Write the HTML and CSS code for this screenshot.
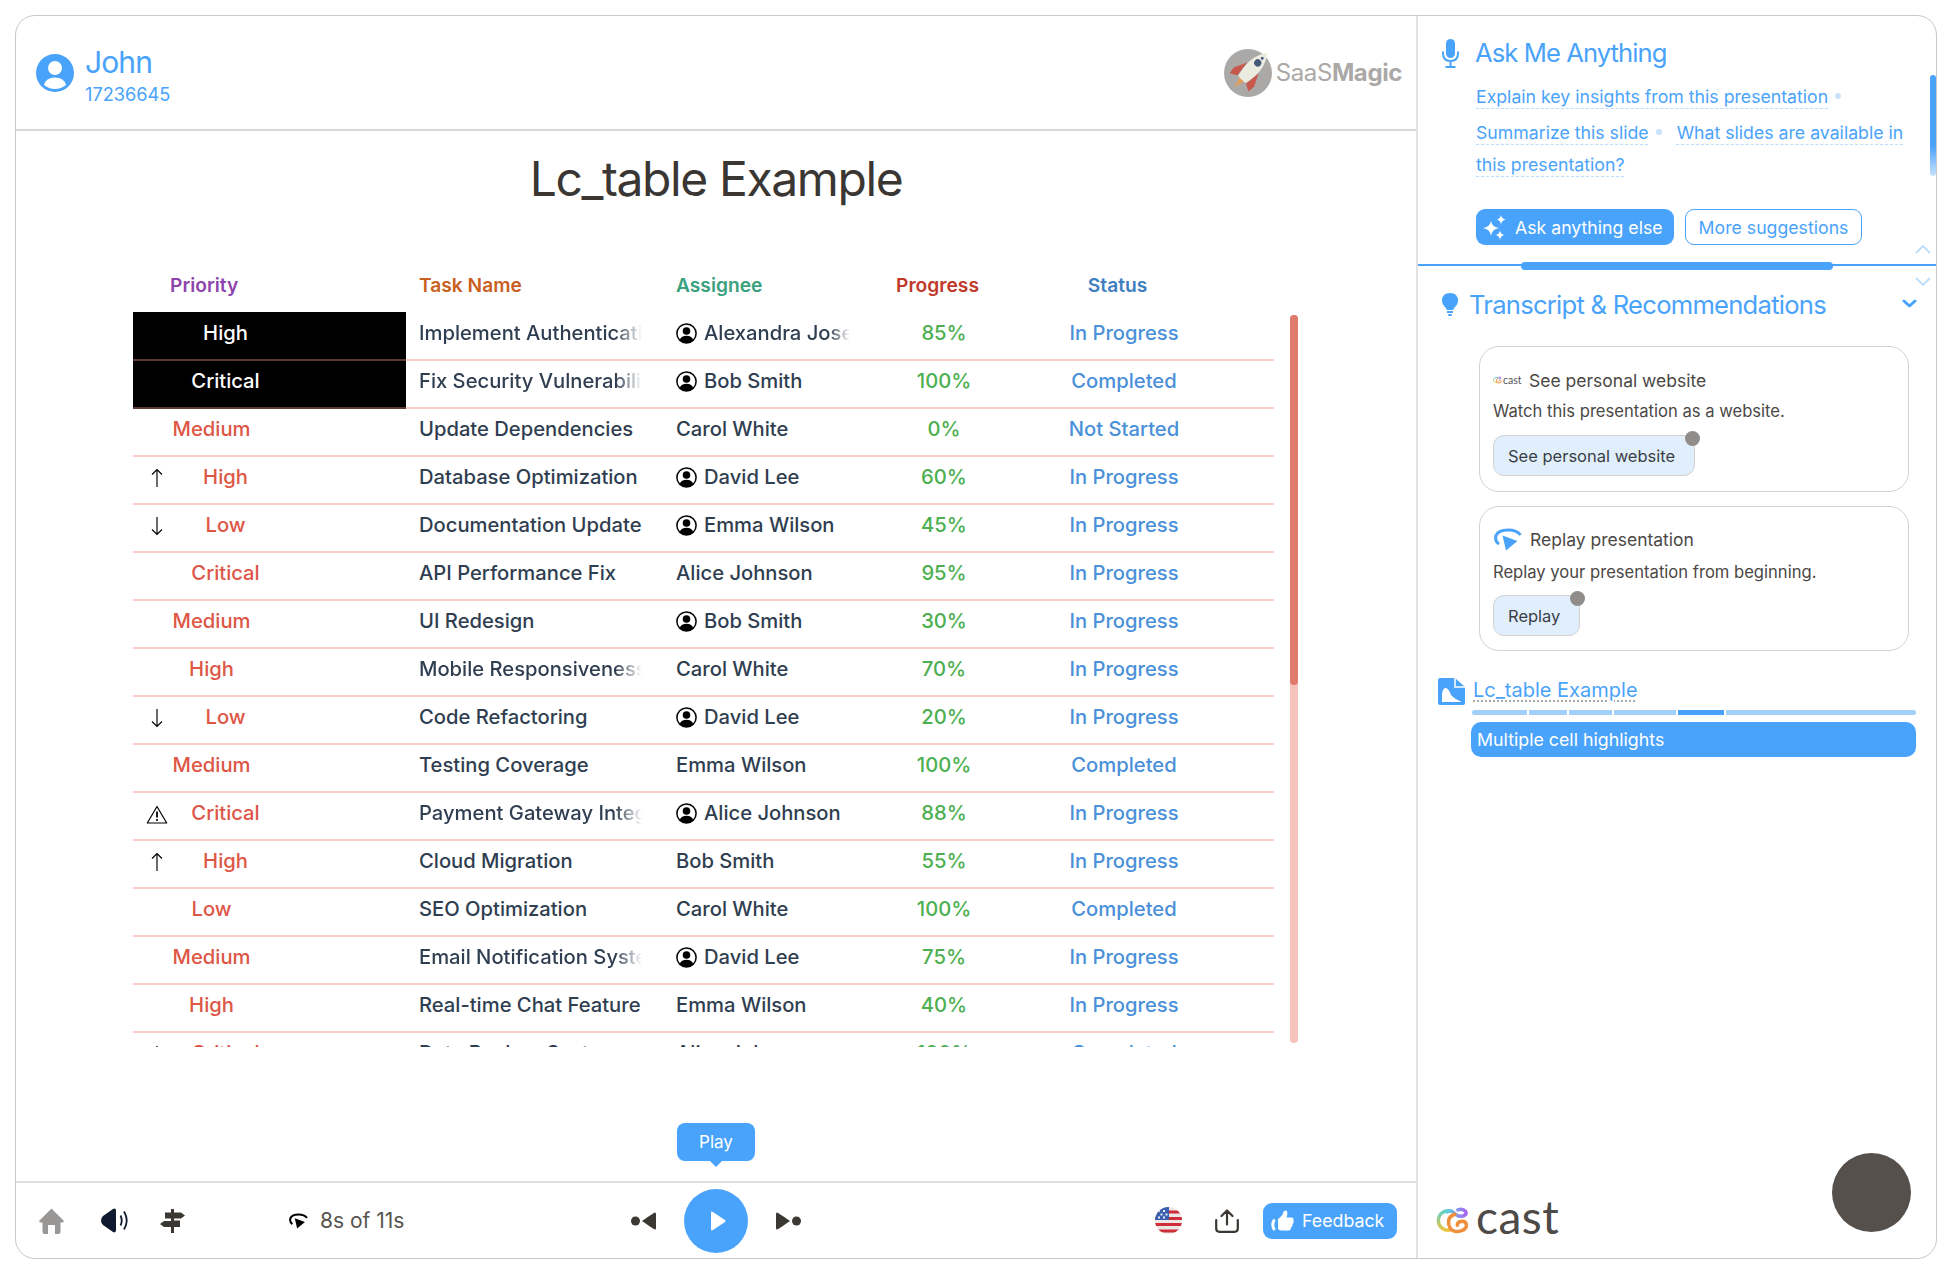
FILE: index.html
```html
<!DOCTYPE html>
<html lang="en">
<head>
<meta charset="utf-8">
<title>Lc_table Example</title>
<link rel="stylesheet" href="styles.css">
</head>
<body>
<svg class="defs" width="0" height="0" aria-hidden="true">
  <defs>
    <symbol id="person" viewBox="0 0 21 21">
      <circle cx="10.5" cy="10.5" r="9.6" fill="#fff" stroke="#000" stroke-width="1.5"/>
      <circle cx="10.5" cy="8" r="3.8" fill="#000"/>
      <path d="M3.6 17 Q5.5 12.8 10.5 12.8 Q15.5 12.8 17.4 17 Q14.5 20 10.5 20 Q6.5 20 3.6 17Z" fill="#000"/>
    </symbol>
    <symbol id="up" viewBox="0 0 14 20">
      <path d="M7 19V1.5M2 6.5L7 1.5L12 6.5" fill="none" stroke="#000" stroke-width="1.15"/>
    </symbol>
    <symbol id="down" viewBox="0 0 14 20">
      <path d="M7 1V18.5M2 13.5L7 18.5L12 13.5" fill="none" stroke="#000" stroke-width="1.15"/>
    </symbol>
    <symbol id="warn" viewBox="0 0 22 19">
      <path d="M11 1.5L20.7 18H1.3Z" fill="none" stroke="#000" stroke-width="1.2" stroke-linejoin="round"/>
      <path d="M11 6.5V12.5" stroke="#000" stroke-width="1.8"/>
      <circle cx="11" cy="15" r="1.1" fill="#000"/>
    </symbol>
    <linearGradient id="castA" x1="0" y1="0" x2="0" y2="1">
      <stop offset="0" stop-color="#62d0c8"/><stop offset="1" stop-color="#ecc63f"/>
    </linearGradient>
    <linearGradient id="castB" x1="0" y1="0" x2="1" y2="0">
      <stop offset="0" stop-color="#5ad3e0"/><stop offset="1" stop-color="#a765f5"/>
    </linearGradient>
    <symbol id="castmark" viewBox="0 0 34 28">
      <path d="M15 4.5A10 10 0 1 0 15 23.5" fill="none" stroke="url(#castA)" stroke-width="3.6" stroke-linecap="round"/>
      <path d="M11 5Q14 2.5 18 6Q22 10.5 27 9.5Q32 8 30 4.5Q27 1 22 3" fill="none" stroke="url(#castB)" stroke-width="3.6" stroke-linecap="round"/>
      <path d="M19 7.5Q11 10 12.5 18Q14.5 26 22 25.5Q31 24.5 31 18.5Q30 14 25 15Q21 16 21.5 19" fill="none" stroke="#ef8f3c" stroke-width="3.6" stroke-linecap="round"/>
    </symbol>
    <symbol id="replay" viewBox="0 0 28 23">
      <path d="M5 16Q0.5 13 2 7.5Q4.5 2 14 2Q23 2 26.5 7" fill="none" stroke="currentColor" stroke-width="3"/>
      <path d="M8.5 7.5L23.5 13L12 22.5Z" fill="currentColor"/>
    </symbol>
  </defs>
</svg>

<div class="frame">
  <div class="stage">
    <header class="top">
      <div class="user">
        <svg class="avatar" viewBox="0 0 38 38">
          <circle cx="19" cy="19" r="19" fill="#4aa3fb"/>
          <circle cx="19" cy="14" r="7" fill="#fff"/>
          <path d="M8 31Q10 23.5 19 23.5Q28 23.5 30 31Q25 35 19 35Q13 35 8 31Z" fill="#fff"/>
        </svg>
        <div class="user-text">
          <div class="user-name">John</div>
          <div class="user-id">17236645</div>
        </div>
      </div>
      <div class="brand">
        <svg class="rocket" viewBox="0 0 48 48">
          <circle cx="24" cy="24" r="24" fill="#aaa9a8"/>
          <g transform="rotate(44 24 24)">
            <path d="M16 17L10 30L11 37L18 33Z" fill="#c8584c"/>
            <path d="M32 17L38 30L37 37L30 33Z" fill="#c8584c"/>
            <path d="M21 33L24 44L27 33Z" fill="#e3a05c"/>
            <path d="M24 -4Q33 8 31 22Q30 30 29 33H19Q18 30 17 22Q15 8 24 -4Z" fill="#ecebdf"/>
            <circle cx="24" cy="10" r="3.600" fill="#47597a"/>
            <circle cx="24" cy="3.500" r="1.500" fill="#47597a"/>
          </g>
        </svg>
        <span class="brand-text">SaaS<b>Magic</b></span>
      </div>
    </header>

    <main class="slide">
      <h1 class="slide-title">Lc_table Example</h1>
      <div class="table-wrap">
        <div class="table-clip">
          <table class="grid">
            <colgroup><col class="c1"><col class="c2"><col class="c3"><col class="c4"><col class="c5"><col class="c6"></colgroup>
            <thead>
              <tr>
                <th class="h-pri">Priority</th><th class="h-task">Task Name</th><th class="h-asg">Assignee</th><th class="h-prog">Progress</th><th class="h-stat">Status</th><th></th>
              </tr>
            </thead>
            <tbody>
              <tr><td class="pri sel"><div class="pri-box"><span class="slot"></span><span class="pri-text">High</span></div></td><td><div class="clip task fade">Implement Authentication</div></td><td><div class="clip asg fade"><svg class="who"><use href="#person"/></svg>Alexandra Josephine</div></td><td class="prog">85%</td><td class="stat">In Progress</td><td></td></tr>
              <tr><td class="pri sel"><div class="pri-box"><span class="slot"></span><span class="pri-text">Critical</span></div></td><td><div class="clip task fade">Fix Security Vulnerability</div></td><td><div class="clip asg"><svg class="who"><use href="#person"/></svg>Bob Smith</div></td><td class="prog">100%</td><td class="stat">Completed</td><td></td></tr>
              <tr><td class="pri"><div class="pri-box"><span class="pri-text">Medium</span></div></td><td><div class="clip task">Update Dependencies</div></td><td><div class="clip asg">Carol White</div></td><td class="prog">0%</td><td class="stat">Not Started</td><td></td></tr>
              <tr><td class="pri"><div class="pri-box"><span class="slot"><svg class="arrow"><use href="#up"/></svg></span><span class="pri-text">High</span></div></td><td><div class="clip task">Database Optimization</div></td><td><div class="clip asg"><svg class="who"><use href="#person"/></svg>David Lee</div></td><td class="prog">60%</td><td class="stat">In Progress</td><td></td></tr>
              <tr><td class="pri"><div class="pri-box"><span class="slot"><svg class="arrow"><use href="#down"/></svg></span><span class="pri-text">Low</span></div></td><td><div class="clip task">Documentation Update</div></td><td><div class="clip asg"><svg class="who"><use href="#person"/></svg>Emma Wilson</div></td><td class="prog">45%</td><td class="stat">In Progress</td><td></td></tr>
              <tr><td class="pri"><div class="pri-box"><span class="slot"></span><span class="pri-text">Critical</span></div></td><td><div class="clip task">API Performance Fix</div></td><td><div class="clip asg">Alice Johnson</div></td><td class="prog">95%</td><td class="stat">In Progress</td><td></td></tr>
              <tr><td class="pri"><div class="pri-box"><span class="pri-text">Medium</span></div></td><td><div class="clip task">UI Redesign</div></td><td><div class="clip asg"><svg class="who"><use href="#person"/></svg>Bob Smith</div></td><td class="prog">30%</td><td class="stat">In Progress</td><td></td></tr>
              <tr><td class="pri"><div class="pri-box"><span class="pri-text">High</span></div></td><td><div class="clip task fade">Mobile Responsiveness</div></td><td><div class="clip asg">Carol White</div></td><td class="prog">70%</td><td class="stat">In Progress</td><td></td></tr>
              <tr><td class="pri"><div class="pri-box"><span class="slot"><svg class="arrow"><use href="#down"/></svg></span><span class="pri-text">Low</span></div></td><td><div class="clip task">Code Refactoring</div></td><td><div class="clip asg"><svg class="who"><use href="#person"/></svg>David Lee</div></td><td class="prog">20%</td><td class="stat">In Progress</td><td></td></tr>
              <tr><td class="pri"><div class="pri-box"><span class="pri-text">Medium</span></div></td><td><div class="clip task">Testing Coverage</div></td><td><div class="clip asg">Emma Wilson</div></td><td class="prog">100%</td><td class="stat">Completed</td><td></td></tr>
              <tr><td class="pri"><div class="pri-box"><span class="slot"><svg class="warn"><use href="#warn"/></svg></span><span class="pri-text">Critical</span></div></td><td><div class="clip task fade">Payment Gateway Integration</div></td><td><div class="clip asg"><svg class="who"><use href="#person"/></svg>Alice Johnson</div></td><td class="prog">88%</td><td class="stat">In Progress</td><td></td></tr>
              <tr><td class="pri"><div class="pri-box"><span class="slot"><svg class="arrow"><use href="#up"/></svg></span><span class="pri-text">High</span></div></td><td><div class="clip task">Cloud Migration</div></td><td><div class="clip asg">Bob Smith</div></td><td class="prog">55%</td><td class="stat">In Progress</td><td></td></tr>
              <tr><td class="pri"><div class="pri-box"><span class="pri-text">Low</span></div></td><td><div class="clip task">SEO Optimization</div></td><td><div class="clip asg">Carol White</div></td><td class="prog">100%</td><td class="stat">Completed</td><td></td></tr>
              <tr><td class="pri"><div class="pri-box"><span class="pri-text">Medium</span></div></td><td><div class="clip task fade">Email Notification System</div></td><td><div class="clip asg"><svg class="who"><use href="#person"/></svg>David Lee</div></td><td class="prog">75%</td><td class="stat">In Progress</td><td></td></tr>
              <tr><td class="pri"><div class="pri-box"><span class="pri-text">High</span></div></td><td><div class="clip task">Real-time Chat Feature</div></td><td><div class="clip asg">Emma Wilson</div></td><td class="prog">40%</td><td class="stat">In Progress</td><td></td></tr>
              <tr><td class="pri"><div class="pri-box"><span class="slot"><svg class="warn"><use href="#warn"/></svg></span><span class="pri-text">Critical</span></div></td><td><div class="clip task">Data Backup System</div></td><td><div class="clip asg">Alice Johnson</div></td><td class="prog">100%</td><td class="stat">Completed</td><td></td></tr>
            </tbody>
          </table>
        </div>
        <div class="table-scroll"><div class="table-thumb"></div></div>
      </div>
    </main>

    <footer class="bar">
      <div class="tip">Play</div>
      <div class="bar-left">
        <svg class="ic-home" viewBox="0 0 25 26"><path d="M12.500 0.500L24.500 12.500Q25.500 14.500 23 14.500H21.500V24Q21.500 26 19.500 26H16V17H9V26H5.500Q3.500 26 3.500 24V14.500H2Q-0.500 14.500 0.500 12.500Z" fill="#999795"/></svg>
        <svg class="ic-sound" viewBox="0 0 28 25"><path d="M2 8L12 1Q15-0.500 15 3V22Q15 25.500 12 24L2 17Q0 15 0 12.500Q0 10 2 8Z" fill="#0f1a30"/><path d="M19.500 7.500Q22 12.500 19.500 17.500M23 3.500Q28.500 12.500 23 21.500" fill="none" stroke="#0f1a30" stroke-width="1.800"/></svg>
        <svg class="ic-sign" viewBox="0 0 25 24"><path d="M11 0H14V3.500H21L25 6.500L21 9.500H14V11.500H20V18H14V24H11V18H4L0 15L4 12H11V9.500H5V3.500H11Z" fill="#3b3733"/></svg>
        <div class="elapsed">
          <svg class="ic-replay"><use href="#replay"/></svg>
          <span>8s of 11s</span>
        </div>
      </div>
      <div class="bar-mid">
        <svg class="ic-skip" viewBox="0 0 25 18"><circle cx="4.500" cy="9" r="4.500" fill="#3b3733"/><path d="M24 0.500Q25 0.500 25 2V16Q25 17.500 24 17.500Q23 17.500 11 9Q23 0.500 24 0.500Z" fill="#3b3733"/></svg>
        <button class="play" type="button" aria-label="Play"><svg viewBox="0 0 16 20"><path d="M1 1.500Q1 0 2.500 0.800L15 9Q16 10 15 11L2.500 19.200Q1 20 1 18.500Z" fill="#fff"/></svg></button>
        <svg class="ic-skip flip" viewBox="0 0 25 18"><circle cx="4.500" cy="9" r="4.500" fill="#3b3733"/><path d="M24 0.500Q25 0.500 25 2V16Q25 17.500 24 17.500Q23 17.500 11 9Q23 0.500 24 0.500Z" fill="#3b3733"/></svg>
      </div>
      <div class="bar-right">
        <svg class="ic-flag" viewBox="0 0 27 27">
          <clipPath id="flagClip"><circle cx="13.500" cy="13.500" r="13.500"/></clipPath>
          <g clip-path="url(#flagClip)">
            <rect width="27" height="27" fill="#ece8e6"/>
            <path d="M0 3.500H27V6.500H0ZM0 10H27V13H0ZM0 16H27V19H0ZM0 22.500H27V25.500H0Z" fill="#cd2e3a"/>
            <rect width="14" height="13" fill="#3a5fae"/>
            <path d="M3 3h2v2H3zM8 3h2v2H8zM5.500 6.500h2v2h-2zM10.500 6.500h2v2h-2zM3 9.500h2v2H3zM8 9.500h2v2H8z" fill="#e8edf7"/>
          </g>
        </svg>
        <svg class="ic-share" viewBox="0 0 24 24"><path d="M12 15.500V1.500M6.500 7L12 1.500L17.500 7M1.200 11V19.500Q1.200 22.800 4.500 22.800H19.500Q22.800 22.800 22.800 19.500V11" fill="none" stroke="#3b3733" stroke-width="2.200" stroke-linecap="round" stroke-linejoin="round"/></svg>
        <button class="feedback" type="button">
          <svg viewBox="0 0 23 21"><path d="M7 9Q11.500 6 12.500 2Q13 0 15 .5Q17.500 1.500 15.500 7.500H21Q23 8 22.500 10.500Q23 13 21.500 14Q22 16.500 20 17.500Q20 20.500 17.500 20.500H11Q8.500 20.500 7 19Z" fill="#fff"/><path d="M3.500 9.500Q0 14.500 3.500 20" fill="none" stroke="#fff" stroke-width="3"/></svg>
          Feedback
        </button>
      </div>
    </footer>
  </div>

  <aside class="side">
    <section class="ask">
      <h2 class="side-title ask-title">
        <svg class="ic-mic" viewBox="0 0 17 29"><rect x="4" y="0" width="9" height="19" rx="4.500" fill="#4aa3fb"/><path d="M1 12.500V14.500Q1 22 8.500 22Q16 22 16 14.500V12.500M8.500 22V27.500M3.500 28H13.500" fill="none" stroke="#4aa3fb" stroke-width="2"/></svg>
        Ask Me Anything
      </h2>
      <p class="links first"><a class="link">Explain key insights from this presentation</a><span class="sep"></span></p>
      <p class="links"><a class="link">Summarize this slide</a><span class="sep"></span><a class="link">What slides are available in</a> <a class="link">this presentation?</a></p>
      <div class="ask-actions">
        <button class="btn-solid" type="button">
          <svg viewBox="0 0 24 25"><path d="M8 6Q9 12 16 13Q9 14 8 21Q7 14 0 13Q7 12 8 6Z M18 0Q18.500 3.500 22.500 4.500Q18.500 5.500 18 9.500Q17.500 5.500 14 4.500Q17.500 3.500 18 0Z M17 15.500Q17.500 19 21 20Q17.500 21 17 25Q16.500 21 13 20Q16.500 19 17 15.500Z" fill="#fff"/></svg>
          Ask anything else
        </button>
        <button class="btn-line" type="button">More suggestions</button>
      </div>
      <div class="ask-scroll"></div>
      <svg class="chev-up" viewBox="0 0 16 9"><path d="M1 8L8 1L15 8" fill="none" stroke="#bcdcfb" stroke-width="1.800"/></svg>
      <svg class="chev-down" viewBox="0 0 16 9"><path d="M1 1L8 8L15 1" fill="none" stroke="#bcdcfb" stroke-width="1.800"/></svg>
      <div class="resize"></div>
    </section>

    <section class="recs">
      <h2 class="side-title recs-title">
        <svg class="ic-bulb" viewBox="0 0 16 23"><path d="M8 0Q16 0 16 8Q16 11 13.500 13.500Q11.500 15.500 11 17H5Q4.500 15.500 2.500 13.500Q0 11 0 8Q0 0 8 0Z" fill="#4aa3fb"/><rect x="5" y="18" width="6" height="2" fill="#4aa3fb"/><rect x="6" y="21" width="4" height="2" rx="1" fill="#4aa3fb"/></svg>
        <span class="recs-label">Transcript &amp; Recommendations</span>
        <svg class="ic-caret" viewBox="0 0 15 9"><path d="M2 2L7.500 7L13 2" fill="none" stroke="#4aa3fb" stroke-width="3" stroke-linecap="round" stroke-linejoin="round"/></svg>
      </h2>

      <div class="card">
        <div class="card-head">
          <span class="mini-cast"><svg class="mini-mark"><use href="#castmark"/></svg>cast</span>
          See personal website
        </div>
        <p class="card-text">Watch this presentation as a website.</p>
        <button class="card-btn" type="button">See personal website<span class="dot"></span></button>
      </div>

      <div class="card card-b">
        <div class="card-head">
          <svg class="ic-replay-b"><use href="#replay"/></svg>
          Replay presentation
        </div>
        <p class="card-text">Replay your presentation from beginning.</p>
        <button class="card-btn" type="button">Replay<span class="dot"></span></button>
      </div>

      <div class="chapter">
        <svg class="ic-doc" viewBox="0 0 27 27"><path d="M2 0H17L27 9V25Q27 27 25 27H2Q0 27 0 25V2Q0 0 2 0Z" fill="#4aa3fb"/><path d="M17 0V9H27" fill="none" stroke="#fff" stroke-width="1.500"/><path d="M4 24V16Q5 9 8 10Q11 11 13 17Q16 20.500 23 23.500V24Z" fill="#fff"/></svg>
        <span class="chapter-name">Lc_table Example</span>
      </div>
      <div class="segments">
        <span class="seg" style="flex-grow:55"></span>
        <span class="seg" style="flex-grow:38"></span>
        <span class="seg" style="flex-grow:42"></span>
        <span class="seg" style="flex-grow:62"></span>
        <span class="seg on" style="flex-grow:46"></span>
        <span class="seg" style="flex-grow:189"></span>
      </div>
      <div class="current">Multiple cell highlights</div>
    </section>

    <div class="side-foot">
      <svg class="cast-mark"><use href="#castmark"/></svg>
      <span class="cast-word">cast</span>
    </div>
    <div class="bubble"></div>
  </aside>
</div>
</body>
</html>
```
FILE: styles.css
```css
* { box-sizing: border-box; }
html, body { margin: 0; height: 100%; }
body {
  padding: 15px 23px 11px 15px;
  background: #fff;
  font-family: Inter, "Liberation Sans", sans-serif;
  color: #2f3e50;
  overflow: hidden;
}
.defs { position: absolute; }
button { font-family: inherit; }

.frame {
  display: flex;
  height: 100%;
  border: 1.5px solid #c8c8c8;
  border-radius: 20px;
  overflow: hidden;
  background: #fff;
}

/* left stage */
.stage { width: 1402px; flex: none; display: flex; flex-direction: column; border-right: 2px solid #e2e2e2; }

.top {
  height: 115px;
  flex: none;
  display: flex;
  justify-content: space-between;
  align-items: center;
  padding: 0 14px 0 20px;
  border-bottom: 2px solid #d8d8d8;
}
.user { display: flex; align-items: center; gap: 11px; color: #4aa3fb; }
.avatar { width: 38px; height: 38px; }
.user-text { padding-top: 3px; }
.user-name { font-size: 30px; line-height: 36px; letter-spacing: -0.9px; }
.user-id { font-size: 18.200px; line-height: 22px; margin-top: 3px; }
.brand { display: flex; align-items: center; gap: 4px; color: #aaa9a8; }
.rocket { width: 48px; height: 48px; overflow: visible; }
.brand-text { font-size: 24px; letter-spacing: -0.4px; }
.brand-text b { font-weight: 700; }

.slide { flex: 1; min-height: 0; padding-top: 19px; }
.slide-title {
  margin: 0;
  font-size: 48px;
  line-height: 58px;
  font-weight: 400;
  text-align: center;
  letter-spacing: -1.4px;
  color: #3a3633;
}
.table-wrap { display: flex; margin: 57px 0 0 117px; }
.table-clip { width: 1141px; height: 782px; overflow: hidden; }
.table-scroll { width: 8px; height: 728px; margin: 50px 0 0 16px; border-radius: 4px; background: #f6c2bb; }
.table-thumb { height: 370px; border-radius: 4px; background: #df7b6c; }

.grid { width: 1141px; table-layout: fixed; border-collapse: separate; border-spacing: 0; font-size: 20.200px; font-weight: 500; }
.c1 { width: 273px; } .c2 { width: 257px; } .c3 { width: 190px; } .c4 { width: 182px; } .c5 { width: 178px; } .c6 { width: 61px; }
.grid th, .grid td { height: 48px; padding: 8px 13px 0; vertical-align: top; line-height: 24px; }
.grid th { height: 47px; font-size: 19.200px; font-weight: 600; text-align: left; }
.grid tbody tr:first-child td { height: 49px; padding-top: 9px; }
.grid td { border-bottom: 2px solid #f9cfc8; }
.h-pri { color: #8e44ad; padding-left: 37px !important; }
.h-task { color: #c9601f; }
.h-asg { color: #3aa17e; }
.h-prog { color: #c0392b; text-align: center !important; padding-right: 26px !important; }
.h-stat { color: #3f7fbf; text-align: center !important; padding-right: 26px !important; }

.pri { color: #dd5646; }
.pri-box { display: flex; width: 131px; }
.slot { flex: none; width: 28px; height: 26px; display: flex; justify-content: center; align-items: center; margin-left: -3px; margin-right: 3px; }
.pri-text { flex: 1; text-align: center; }
.sel { background: #000; color: #fff; border-bottom-color: #5a3b37 !important; }
.arrow { width: 14px; height: 20px; }
.warn { width: 22px; height: 19px; }

.clip { white-space: nowrap; overflow: hidden; }
.task { width: 223px; }
.asg { width: 174px; display: flex; align-items: center; gap: 7px; }
.fade { mask-image: linear-gradient(to right, #000 88%, transparent); -webkit-mask-image: linear-gradient(to right, #000 88%, transparent); }
.who { width: 21px; height: 21px; flex: none; }
.prog { text-align: center; color: #4caf50; }
.stat { text-align: center; color: #4a90d9; }

/* bottom bar */
.bar {
  position: relative;
  height: 77px;
  flex: none;
  display: grid;
  grid-template-columns: 1fr auto 1fr;
  align-items: center;
  padding: 0 19px;
  border-top: 2px solid #dedede;
}
.tip {
  position: absolute;
  left: 661px;
  top: -60px;
  width: 78px;
  height: 38px;
  border-radius: 8px;
  background: #4aa3fb;
  color: #fff;
  font-size: 17px;
  line-height: 38px;
  text-align: center;
}
.tip::after {
  content: "";
  position: absolute;
  left: 33px;
  bottom: -6px;
  border: 6px solid transparent;
  border-bottom: 0;
  border-top-color: #4aa3fb;
}
.bar-left { display: flex; align-items: center; padding-left: 4px; }
.ic-home { width: 25px; height: 26px; }
.ic-sound { width: 28px; height: 25px; margin-left: 37px; }
.ic-sign { width: 25px; height: 24px; margin-left: 31px; }
.elapsed { display: flex; align-items: center; gap: 12px; margin-left: 104px; font-size: 21px; color: #57534e; }
.ic-replay { width: 19px; height: 16px; color: #000; }
.bar-mid { display: flex; align-items: center; gap: 0; }
.ic-skip { width: 25px; height: 18px; }
.flip { transform: scaleX(-1); }
.play {
  width: 64px;
  height: 64px;
  margin: 0 28px;
  padding: 0;
  border: 0;
  border-radius: 50%;
  background: #4aa3fb;
  display: flex;
  align-items: center;
  justify-content: center;
}
.play svg { width: 16px; height: 20px; margin-left: 3px; }
.bar-right { display: flex; align-items: center; justify-content: flex-end; }
.ic-flag { width: 27px; height: 27px; }
.ic-share { width: 24px; height: 24px; margin-left: 33px; }
.feedback {
  display: flex;
  align-items: center;
  gap: 8px;
  width: 134px;
  height: 36px;
  margin-left: 24px;
  padding: 0 0 0 8px;
  border: 0;
  border-radius: 9px;
  background: #4aa3fb;
  color: #fff;
  font-size: 17.800px;
}
.feedback svg { width: 23px; height: 21px; }

/* right side */
.side { position: relative; flex: 1; min-width: 0; display: flex; flex-direction: column; }
.ask { position: relative; height: 250px; flex: none; padding: 21px 0 0 24px; border-bottom: 2px solid #4aa3fb; }
.side-title {
  display: flex;
  align-items: center;
  margin: 0;
  font-size: 25.600px;
  line-height: 32px;
  font-weight: 400;
  letter-spacing: -0.750px;
  color: #4aa3fb;
}
.ask-title { letter-spacing: -0.920px; }
.ic-mic { width: 17px; height: 29px; margin-right: 16px; }
.links { margin: 0 0 0 34px; width: 436px; font-size: 17.700px; line-height: 32px; color: #4aa3fb; }
.links.first { margin-top: 12px; margin-bottom: 4px; }
.link { text-decoration: underline dashed #bcdcfb 1px; text-underline-offset: 5px; }
.sep {
  display: inline-block;
  width: 6px;
  height: 6px;
  margin: 0 15px 4px 7px;
  border-radius: 50%;
  background: #c9e2fc;
  vertical-align: middle;
}
.ask-actions { display: flex; gap: 11px; margin: 28px 0 0 34px; }
.btn-solid, .btn-line { height: 36px; border-radius: 9px; font-size: 17.700px; display: flex; align-items: center; }
.btn-solid { width: 198px; padding: 0 0 0 7px; gap: 8px; border: 0; background: #4aa3fb; color: #fff; }
.btn-solid svg { width: 24px; height: 25px; }
.btn-line { width: 177px; justify-content: center; padding: 0; border: 1px solid #4aa3fb; background: #fff; color: #4aa3fb; }
.ask-scroll {
  position: absolute;
  right: 0;
  top: 59px;
  width: 6px;
  height: 101px;
  border-radius: 3px;
  background: linear-gradient(#4aa3fb 70%, #c9e2fc);
}
.chev-up, .chev-down { position: absolute; left: 497px; width: 16px; height: 9px; }
.chev-up { top: 229px; }
.chev-down { top: 261px; z-index: 1; }
.resize { position: absolute; left: 103px; bottom: -6px; width: 312px; height: 8px; border-radius: 4px; background: #4aa3fb; }

.recs { padding: 23px 0 0 24px; }
.recs-title { width: 475px; }
.ic-bulb { width: 16px; height: 23px; margin-right: 11px; margin-top: -2px; }
.recs-label { flex: 1; }
.ic-caret { width: 15px; height: 9px; margin-top: -4px; }

.card {
  width: 430px;
  height: 146px;
  margin: 25px 0 0 37px;
  padding: 21px 14px 0 13px;
  border: 1.5px solid #d2d2d2;
  border-radius: 20px;
  color: #4b4845;
}
.card-b { height: 145px; margin-top: 14px; padding-top: 20px; }
.card-head { display: flex; align-items: center; height: 24px; font-size: 17.500px; }
.mini-cast { display: inline-flex; align-items: center; width: 36px; font-size: 10.500px; font-family: Lato, sans-serif; color: #555; }
.mini-mark { width: 9px; height: 8px; margin-right: 1px; }
.ic-replay-b { width: 28px; height: 23px; margin: 0 8px 0 1px; color: #4aa3fb; }
.card-text { margin: 8px 0 0; font-size: 16.600px; line-height: 22px; }
.card-b .card-text { margin-top: 10px; }
.card-btn {
  position: relative;
  display: block;
  height: 41px;
  margin-top: 13px;
  padding: 0 19px 0 14px;
  border: 1.5px solid #d2d2d2;
  border-radius: 11px;
  background: #e1effd;
  color: #3a3f45;
  font-size: 16.500px;
}
.card-b .card-btn { margin-top: 12px; }
.dot {
  position: absolute;
  right: -6px;
  top: -5px;
  width: 15px;
  height: 15px;
  border-radius: 50%;
  background: #8f8c8a;
}

.chapter { display: flex; align-items: flex-start; gap: 8px; margin: 27px 0 0 -4px; height: 27px; }
.ic-doc { width: 27px; height: 27px; }
.chapter-name {
  font-size: 20px;
  line-height: 24px;
  color: #4aa3fb;
  text-decoration: underline dotted #a8a8a8 1.500px;
  text-underline-offset: 3px;
}
.segments { display: flex; gap: 2px; width: 444px; height: 5px; margin: 5px 0 0 30px; }
.seg { flex: 1 1 0; background: #a3cffb; }
.seg:first-child { border-radius: 3px 0 0 3px; }
.seg:last-child { border-radius: 0 3px 3px 0; }
.seg.on { background: #4aa3fb; }
.current {
  width: 445px;
  height: 35px;
  margin: 7px 0 0 29px;
  padding-left: 6px;
  border-radius: 10px;
  background: #4aa3fb;
  color: #fff;
  font-size: 17.800px;
  line-height: 35px;
}

.side-foot { margin-top: auto; display: flex; align-items: flex-end; gap: 6px; padding: 0 0 24px 18px; }
.cast-mark { width: 34px; height: 27px; }
.cast-word { font-family: Lato, sans-serif; font-size: 46px; line-height: 34px; letter-spacing: 0.500px; color: #4d4a47; }
.bubble {
  position: absolute;
  right: 25px;
  bottom: 26px;
  width: 79px;
  height: 79px;
  border-radius: 50%;
  background: #55504c;
}
```
